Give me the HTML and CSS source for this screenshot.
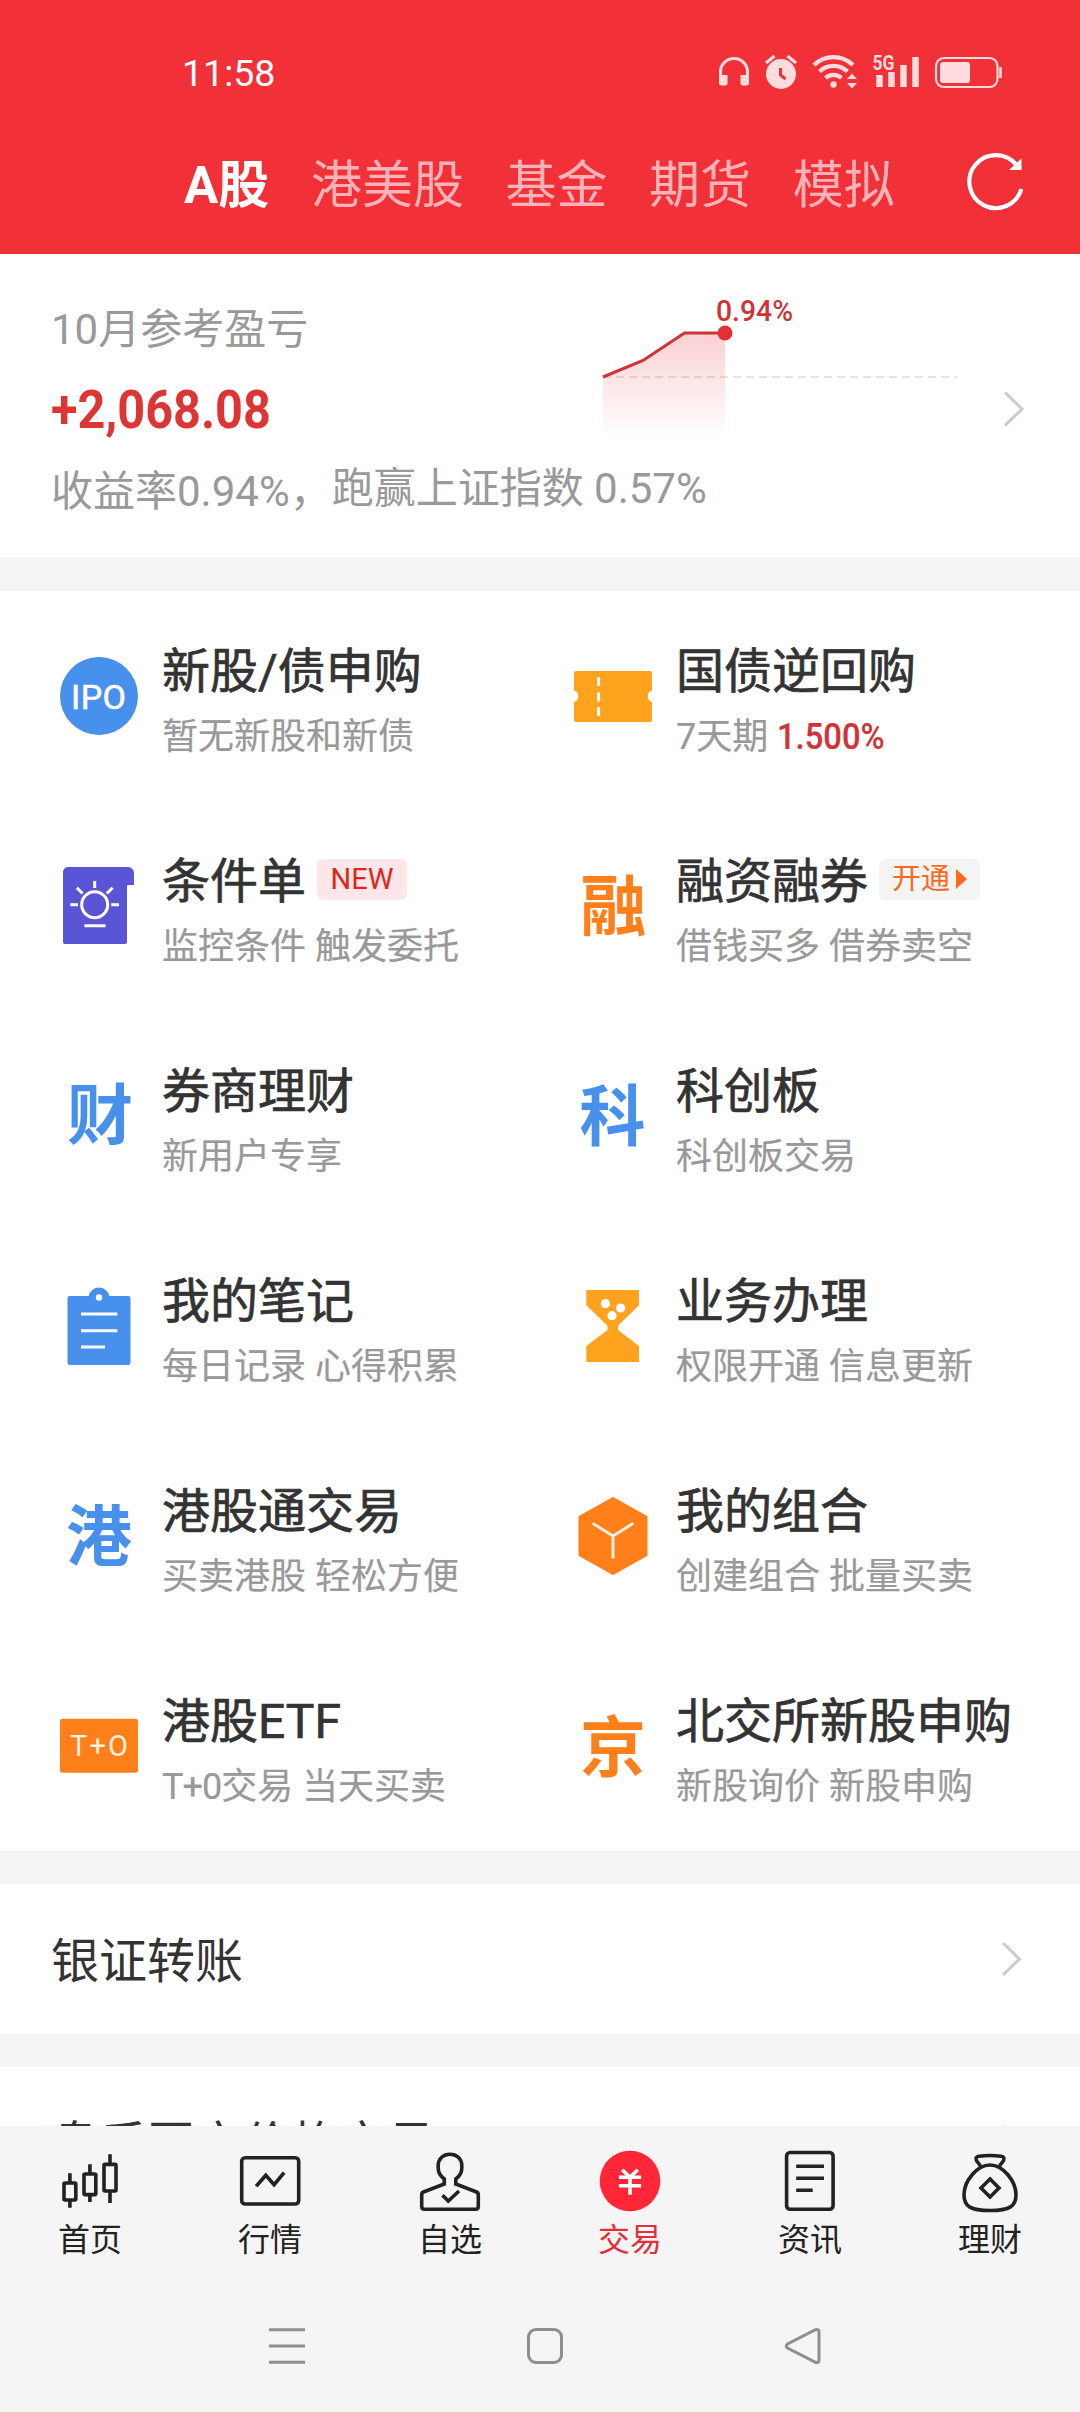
FILE: index.html
```html
<!DOCTYPE html>
<html lang="zh-CN">
<head>
<meta charset="utf-8">
<title>交易</title>
<link rel="stylesheet" href="styles.css">
</head>
<body>
<div class="phone">
  <header class="header">
    <div class="status">
      <span class="clock">11:58</span>
      <div class="status-icons">
        <svg width="32" height="40" viewBox="719 53 32 40"><path d="M721.5 76V71.500a13.500 13 0 0 1 27 0V76" fill="none" stroke="currentColor" stroke-width="3"/><path d="M720 75h8.500v8a2.500 2.500 0 0 1-2.500 2.500h-3.500a2.500 2.500 0 0 1-2.500-2.500zM741.500 75h8.500v8a2.500 2.500 0 0 1-2.500 2.500h-3.500a2.500 2.500 0 0 1-2.500-2.500z" fill="currentColor"/></svg>
        <svg width="34" height="40" viewBox="766 53 34 40"><circle cx="783" cy="74" r="15" fill="currentColor"/><path d="M768 63l8.500-7M798 63l-8.500-7" stroke="currentColor" stroke-width="3.200"/><path d="M782.500 68v7l5 4" fill="none" stroke="#f13037" stroke-width="3"/></svg>
        <svg width="46" height="40" viewBox="814 53 46 40"><g fill="none" stroke="currentColor" stroke-width="4.200"><path d="M816 65a28 28 0 0 1 39 0"/><path d="M821.500 71.500a20 20 0 0 1 28 0"/><path d="M827.500 78a12 12 0 0 1 16 0"/></g><circle cx="835.500" cy="84.500" r="3.200" fill="currentColor"/><path d="M849 79l5-5.500 5 5.500zM849 83l5 5.500 5-5.500z" fill="currentColor"/></svg>
        <svg width="48" height="40" viewBox="872 53 48 40"><text x="872.500" y="70" class="net" textLength="22" lengthAdjust="spacingAndGlyphs">5G</text><path d="M879.500 75v12M891.500 72v15M903.500 65v22M915.500 57v30" stroke="currentColor" stroke-width="6.500"/></svg>
        <svg width="69" height="40" viewBox="934 53 69 40"><rect x="936" y="58" width="61.500" height="29" rx="8" fill="none" stroke="currentColor" stroke-width="2.200"/><rect x="940" y="62" width="30" height="21" rx="3" fill="currentColor"/><path d="M1000.500 67v11" stroke="currentColor" stroke-width="2.500"/></svg>
      </div>
    </div>
    <nav class="markets">
      <a class="market active">A股</a>
      <a class="market">港美股</a>
      <a class="market">基金</a>
      <a class="market">期货</a>
      <a class="market">模拟</a>
      <svg class="refresh" width="64" height="64" viewBox="964 150 64 64"><path d="M1021.300 189A26.500 26.500 0 1 1 1016.500 165" fill="none" stroke="#fff" stroke-width="4.200"/><path d="M1021.500 158.500V170H1009z" fill="#fff"/></svg>
    </nav>
  </header>

  <main class="content">
    <section class="profit">
      <div class="profit-title">10月参考盈亏</div>
      <div class="profit-value"><span>+2,068.08</span></div>
      <svg class="chart" width="380" height="162" viewBox="590 290 380 162">
        <defs><linearGradient id="fade" x1="0" y1="333" x2="0" y2="438" gradientUnits="userSpaceOnUse"><stop offset="0" stop-color="#e8343a" stop-opacity=".23"/><stop offset="1" stop-color="#e8343a" stop-opacity="0"/></linearGradient></defs>
        <path d="M603 377H957" stroke="#dcdcdc" stroke-width="1.500" stroke-dasharray="8 5"/>
        <path d="M603 377L643 360.500L684.500 333H725V438H603z" fill="url(#fade)"/>
        <path d="M603 377L643 360.500L684.500 333H725" fill="none" stroke="#cf3338" stroke-width="3"/>
        <circle cx="725" cy="333" r="7.500" fill="#e52f34"/>
        <text x="716" y="321" class="chart-label" textLength="77" lengthAdjust="spacingAndGlyphs">0.94%</text>
      </svg>
      <div class="profit-note"><span class="rate">收益率0.94%，</span><span>跑赢上证指数 0.57%</span></div>
      <svg class="profit-arrow" width="24" height="40" viewBox="0 0 24 40"><path d="M3 3.500L20 20L3 36.500" class="chevron"/></svg>
    </section>

    <section class="grid">
      <a class="item">
        <svg class="icon" viewBox="0 0 78 78"><circle cx="39" cy="39" r="39" fill="#4790eb"/><text x="11" y="51.500" class="ico-ipo" textLength="55">IPO</text></svg>
        <div class="text"><div class="name">新股/债申购</div><div class="desc">暂无新股和新债</div></div>
      </a>
      <a class="item">
        <svg class="icon" viewBox="0 0 78 78"><path d="M2 14H76a2 2 0 0 1 2 2V33.500a6 6 0 0 0 0 11.500V63a2 2 0 0 1-2 2H2a2 2 0 0 1-2-2V45a6 6 0 0 0 0-11.500V16a2 2 0 0 1 2-2z" fill="#ffa21e"/><path d="M24.600 20.300V29M24.600 35.500V44.500M24.600 50V59" stroke="#fff" stroke-width="3"/></svg>
        <div class="text"><div class="name">国债逆回购</div><div class="desc">7天期 <b class="yield">1.500%</b></div></div>
      </a>
      <a class="item">
        <svg class="icon" viewBox="0 0 78 78"><path d="M8 0H68a6 6 0 0 1 6 6V18H67V75a2 2 0 0 1-2 2H5a2 2 0 0 1-2-2V5a5 5 0 0 1 5-5z" fill="#5a55d6"/><g fill="none" stroke="#fff" stroke-width="3"><circle cx="34.700" cy="37.700" r="13"/><path d="M34.700 14V21M10.300 37.700H18M51.200 37.700H59M16.800 20.700L22.600 26.500M52.600 20.700L46.800 26.500M24.400 58.700H45.600"/></g></svg>
        <div class="text"><div class="name">条件单<span class="tag tag-new">NEW</span></div><div class="desc">监控条件 触发委托</div></div>
      </a>
      <a class="item">
        <svg class="icon" viewBox="0 0 78 78"><text x="39.500" y="62.500" class="glyph orange">融</text></svg>
        <div class="text"><div class="name">融资融券<span class="tag tag-open">开通<i class="play"></i></span></div><div class="desc">借钱买多 借券卖空</div></div>
      </a>
      <a class="item">
        <svg class="icon" viewBox="0 0 78 78"><text x="40" y="61.500" class="glyph blue">财</text></svg>
        <div class="text"><div class="name">券商理财</div><div class="desc">新用户专享</div></div>
      </a>
      <a class="item">
        <svg class="icon" viewBox="0 0 78 78"><text x="38.500" y="63" class="glyph blue">科</text></svg>
        <div class="text"><div class="name">科创板</div><div class="desc">科创板交易</div></div>
      </a>
      <a class="item">
        <svg class="icon" viewBox="0 0 78 78"><path d="M9.500 9H28.700a10.500 10.500 0 0 1 20.600 0H68.500a2 2 0 0 1 2 2V76a2 2 0 0 1-2 2H9.500a2 2 0 0 1-2-2V11a2 2 0 0 1 2-2z" fill="#4790eb"/><circle cx="39" cy="10.500" r="3.200" fill="#fff"/><path d="M21 27H57.400M21 43.700H57.400M21 60H45" stroke="#fff" stroke-width="3"/></svg>
        <div class="text"><div class="name">我的笔记</div><div class="desc">每日记录 心得积累</div></div>
      </a>
      <a class="item">
        <svg class="icon" viewBox="0 0 78 78"><path d="M12.300 3H65V18.300L44 38.700V43L65 59V75H12.300V59L33.500 43V38.700L12.300 18.300z" fill="#ffa21e"/><g fill="#fff"><circle cx="31.400" cy="16.700" r="4.600"/><circle cx="46.600" cy="21" r="4.600"/><circle cx="38" cy="28.700" r="4.600"/></g></svg>
        <div class="text"><div class="name">业务办理</div><div class="desc">权限开通 信息更新</div></div>
      </a>
      <a class="item">
        <svg class="icon" viewBox="0 0 78 78"><text x="39" y="63" class="glyph blue">港</text></svg>
        <div class="text"><div class="name">港股通交易</div><div class="desc">买卖港股 轻松方便</div></div>
      </a>
      <a class="item">
        <svg class="icon" viewBox="0 0 78 78"><path d="M39 1.500L72 20V58L39 76.500L6 58V20z" fill="#ff801a" stroke="#ff801a" stroke-width="3" stroke-linejoin="round"/><path d="M18.700 26.300L39 39L59.300 26.300M39 39V61.500" fill="none" stroke="#ffeedd" stroke-width="3"/></svg>
        <div class="text"><div class="name">我的组合</div><div class="desc">创建组合 批量买卖</div></div>
      </a>
      <a class="item">
        <svg class="icon" viewBox="0 0 78 78"><rect y="11.700" width="78" height="54" rx="2.500" fill="#ff801a"/><text x="10" y="49" class="ico-t0" textLength="58">T+O</text></svg>
        <div class="text"><div class="name">港股ETF</div><div class="desc"><span class="tight">T+0</span>交易 当天买卖</div></div>
      </a>
      <a class="item">
        <svg class="icon" viewBox="0 0 78 78"><text x="39" y="64" class="glyph orange">京</text></svg>
        <div class="text"><div class="name">北交所新股申购</div><div class="desc">新股询价 新股申购</div></div>
      </a>
    </section>

    <a class="row"><span>银证转账</span><svg width="24" height="40" viewBox="0 0 24 40"><path d="M3 4L19.500 20L3 36" class="chevron"/></svg></a>
    <a class="row"><span>盘后固定价格交易</span><svg width="24" height="40" viewBox="0 0 24 40"><path d="M3 4L19.500 20L3 36" class="chevron"/></svg></a>
  </main>

  <footer class="bottom">
    <nav class="tabs">
      <a class="tab"><svg viewBox="0 0 66 66"><rect x="7" y="35" width="11.800" height="17" rx="1"/><rect x="27" y="26" width="11.800" height="20.600" rx="1"/><rect x="47" y="16.400" width="12" height="26.600" rx="1"/><path d="M12.900 25.300V35M12.900 52V59.700M32.900 16.300V26M32.900 46.600V54M53 6.300V16.400M53 43V55"/></svg><span>首页</span></a>
      <a class="tab"><svg viewBox="0 0 66 66"><rect x="4.700" y="9.700" width="57" height="46.300" rx="3.500"/><path d="M19.200 38.300L28.800 27.300L37.100 36.700L47.100 24.700"/></svg><span>行情</span></a>
      <a class="tab"><svg viewBox="0 0 66 66"><path d="M27.300 31V36L6.500 44Q4.700 44.800 4.700 47V58.500Q4.700 61.200 7.500 61.200H58.500Q61.300 61.200 61.300 58.500V47Q61.300 44.800 59.500 44L38.800 36V31Q44.800 26.500 44.800 20V17.500C44.800 10.500 39.500 6.300 33 6.300S21.200 10.500 21.200 17.500V20Q21.200 26.500 27.300 31z"/><path d="M25.500 47.300L31.300 53L42 43"/></svg><span>自选</span></a>
      <a class="tab current"><svg viewBox="0 0 66 66"><circle cx="33" cy="33" r="30.300" class="coin"/><path d="M25.200 21.700L33 29.300L40.800 21.700M21.900 29.300H44.100M21.900 37.700H44.100M33 29.300V46.700" class="yuan"/></svg><span>交易</span></a>
      <a class="tab"><svg viewBox="0 0 66 66"><rect x="9.600" y="4.500" width="46.500" height="56.800" rx="3.500"/><path d="M19.200 18.300H47M19.200 30.300H47M19.200 42.300H35.700"/></svg><span>资讯</span></a>
      <a class="tab"><svg viewBox="0 0 66 66"><path d="M23.500 18L19.400 12.500C18.300 9.500 19.500 8.700 22 8.200Q33 6.800 44 8.200C46.500 8.700 47.700 9.500 46.600 12.500L42.500 18"/><path d="M33 17C20 17 7 33 7 47C7 58 13 62.500 33 62.500S59 58 59 47C59 33 46 17 33 17z"/><path d="M33 31L42 40L33 49L24 40z"/></svg><span>理财</span></a>
    </nav>
    <div class="keys">
      <svg viewBox="0 0 40 40"><path d="M2 3.700H38M2 20H38M2 36.300H38"/></svg>
      <svg viewBox="0 0 40 40"><rect x="3.500" y="3.500" width="33" height="33" rx="7.500"/></svg>
      <svg viewBox="0 0 40 40"><path d="M4.500 18L32.500 3.700Q36 2.800 36 6V34Q36 37.200 32.500 36.300L4.500 22Q2 20 4.500 18z"/></svg>
    </div>
  </footer>
</div>
</body>
</html>
```
FILE: styles.css
```css
* { box-sizing: border-box; }
body { margin: 0; background: #f4f4f4; font-family: Roboto, "Noto Sans CJK SC", sans-serif; color: #333; }
svg { display: block; flex: none; }
.phone { width: 1080px; height: 2412px; display: flex; flex-direction: column; overflow: hidden; }

.header { height: 254px; flex: none; background: #f13037; color: #fff; }
.status { height: 110px; padding: 36px 77px 0 182px; display: flex; align-items: center; justify-content: space-between; }
.clock { font-size: 37.500px; line-height: 40px; }
.status-icons { display: flex; gap: 14px; color: #ffdcdd; }
.net { font-size: 21px; font-weight: 700; fill: currentColor; }
.markets { height: 144px; padding: 0 52px 0 184px; display: flex; align-items: center; gap: 41.600px; }
.market { padding-top: 7px; font-size: 51px; line-height: 70px; color: #ffb3b8; white-space: nowrap; }
.market.active { color: #fff; font-weight: 700; }
.refresh { margin-left: auto; }

.content { flex: 1; min-height: 0; overflow: hidden; display: flex; flex-direction: column; gap: 33px; }
.content > * { flex: none; background: #fff; }
.profit { height: 303px; margin-bottom: 1px; padding: 36px 54px 0 51px; display: grid; grid-template: 76px 86px 76px / 539px 1fr 24px; align-items: center; }
.profit-title, .profit-note { font-size: 42px; line-height: 60px; color: #999; white-space: nowrap; }
.profit-title { padding-top: 4px; }
.profit-value { grid-row: 2; padding-top: 2px; font-size: 53px; font-weight: 700; line-height: 64px; color: #dd3434; }
.profit-value span { display: inline-block; transform: scaleX(.917); transform-origin: left; }
.chart { grid-area: 1 / 2 / 3 / 3; }
.chart-label { font-size: 29.500px; font-weight: 500; fill: #cf3338; }
.profit-note { grid-area: 3 / 1 / 4 / 3; display: flex; align-items: flex-start; }
.rate { padding-top: 3px; }
.profit-arrow { grid-area: 1 / 3 / 4 / 4; }
.chevron { fill: none; stroke: #ccc; stroke-width: 3; }

.grid { display: grid; grid-template-columns: 514px 1fr; grid-auto-rows: 210px; }
.item { display: flex; align-items: center; padding-left: 60px; gap: 24px; }
.icon { width: 78px; height: 78px; }
.text { padding-top: 15px; }
.name { height: 66px; display: flex; align-items: center; font-size: 48px; line-height: 66px; white-space: nowrap; -webkit-text-stroke: .7px currentColor; }
.desc { font-size: 36px; line-height: 64px; color: #999; white-space: nowrap; -webkit-text-stroke: .2px currentColor; }
.yield { display: inline-block; font-weight: 500; color: #d0343a; transform: scaleX(.91); transform-origin: left; }
.tight { letter-spacing: -1px; }
.tag { height: 41px; margin: 0 0 5px 11px; border-radius: 6px; display: flex; align-items: center; justify-content: center; font-size: 29px; line-height: 41px; -webkit-text-stroke: 0; }
.tag-new { width: 90px; background: #ffe6e8; color: #e0261b; }
.tag-open { width: 101px; gap: 6px; background: #f4f4f4; color: #f76a22; }
.play { border: solid transparent; border-width: 10px 0 10px 11px; border-left-color: #ff6b1a; }
.glyph { font-size: 66px; font-weight: 700; text-anchor: middle; }
.blue { fill: #4790eb; }
.orange { fill: #ff801a; }
.ico-ipo { font-size: 34px; fill: #fff; stroke: #fff; stroke-width: .6px; }
.ico-t0 { font-size: 29px; fill: #fff3e0; }

.row { height: 150px; padding: 0 56px 0 51px; display: flex; align-items: center; justify-content: space-between; font-size: 48px; }
.row span { padding-bottom: 4px; }

.bottom { height: 286px; flex: none; background: #f5f5f5; color: #222; }
.tabs { display: grid; grid-template-columns: repeat(6, 1fr); padding-top: 22px; }
.tab { display: flex; flex-direction: column; align-items: center; font-size: 32px; line-height: 52px; }
.tab svg { width: 66px; height: 66px; fill: none; stroke: currentColor; stroke-width: 3.600px; }
.current { color: #e0303c; }
.tab .coin { fill: #ff2638; stroke: none; }
.tab .yuan { stroke: #fff; }
.keys { display: flex; justify-content: center; gap: 218px; padding: 60px 0 0 10px; }
.keys svg { width: 40px; height: 40px; fill: none; stroke: #8e8e8e; stroke-width: 3px; }
```
